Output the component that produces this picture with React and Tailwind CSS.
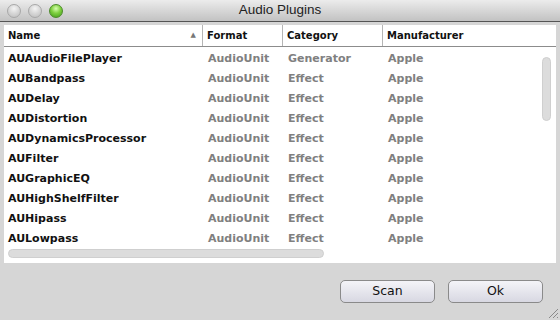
const rows = [
  ["AUAudioFilePlayer", "Generator"],
  ["AUBandpass", "Effect"],
  ["AUDelay", "Effect"],
  ["AUDistortion", "Effect"],
  ["AUDynamicsProcessor", "Effect"],
  ["AUFilter", "Effect"],
  ["AUGraphicEQ", "Effect"],
  ["AUHighShelfFilter", "Effect"],
  ["AUHipass", "Effect"],
  ["AULowpass", "Effect"],
];

function Light({ green }) {
  return (
    <div
      className={
        green
          ? "w-[14px] h-[14px] rounded-full border border-[#4c8a2a] bg-[radial-gradient(circle_at_50%_30%,#d8ffb0_0%,#7fd040_45%,#3f9a18_100%)]"
          : "w-[14px] h-[14px] rounded-full border border-[#a8a8a8] bg-[radial-gradient(circle_at_50%_30%,#f4f4f4_0%,#d6d6d6_50%,#bcbcbc_100%)]"
      }
    />
  );
}

export default function App() {
  return (
    <div className="w-[560px] h-[320px] bg-[#d6d6d6] flex flex-col font-['DejaVu_Sans',sans-serif] overflow-hidden relative">
      <div className="h-[22px] shrink-0 relative flex items-center pl-[7px] gap-[7px] bg-gradient-to-b from-[#ececec] to-[#c2c2c2] border-b border-[#555]">
        <Light />
        <Light />
        <Light green />
        <div className="absolute inset-0 flex items-center justify-center text-[13.5px] text-[#222] font-['Liberation_Sans',sans-serif]">
          Audio Plugins
        </div>
      </div>

      <div className="mx-[4px] mt-[3px] h-[238px] bg-white relative">
        <div className="flex h-[22px] border-b border-[#8c8c8c] text-[10px] font-bold text-[#111]">
          <div className="w-[199px] flex items-center justify-between pl-[4px] pr-[6px] border-r border-[#b5b5b5]">
            <span>Name</span>
            <span className="text-[7px] text-[#777]">▲</span>
          </div>
          <div className="w-[80px] flex items-center pl-[4px] border-r border-[#b5b5b5]">Format</div>
          <div className="w-[100px] flex items-center pl-[4px] border-r border-[#b5b5b5]">Category</div>
          <div className="flex-1 flex items-center pl-[4px]">Manufacturer</div>
        </div>

        <div className="flex flex-col pt-[2px]">
          {rows.map(([name, cat]) => (
            <div key={name} className="flex h-[20px] items-center text-[11px] font-bold">
              <div className="w-[199px] pl-[4px] text-[#111]">{name}</div>
              <div className="w-[80px] pl-[5px] text-[#808080]">AudioUnit</div>
              <div className="w-[100px] pl-[5px] text-[#808080]">{cat}</div>
              <div className="flex-1 pl-[5px] text-[#808080]">Apple</div>
            </div>
          ))}
        </div>

        <div className="absolute left-[4px] top-[224px] w-[316px] h-[9px] rounded-full bg-[#dcdcdc] border border-[#cfcfcf]" />
        <div className="absolute right-[5px] top-[32px] w-[9px] h-[64px] rounded-full bg-[#dcdcdc] border border-[#cfcfcf]" />
      </div>

      <div className="flex justify-end gap-[13px] pr-[17px] pt-[17px] text-[12.5px] text-[#111]">
        <button className="w-[95px] h-[23px] rounded-[5px] border border-[#8a8a8a] bg-gradient-to-b from-[#f4f4f8] to-[#d8d8e2]">Scan</button>
        <button className="w-[95px] h-[23px] rounded-[5px] border border-[#8a8a8a] bg-gradient-to-b from-[#f4f4f8] to-[#d8d8e2]">Ok</button>
      </div>

      <svg className="absolute right-[1px] bottom-[1px]" width="12" height="12" viewBox="0 0 12 12">
        <path d="M11 2 L2 11 M11 6 L6 11 M11 10 L10 11" stroke="#8a8a8a" strokeWidth="1" />
      </svg>
    </div>
  );
}
